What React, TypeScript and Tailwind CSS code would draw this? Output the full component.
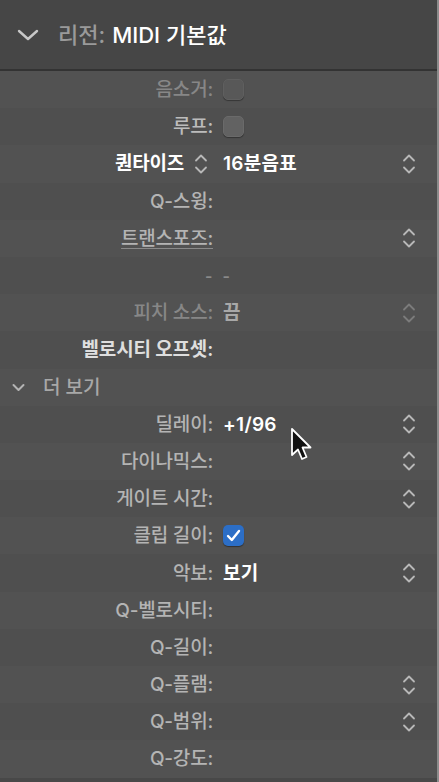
import React from "react";

const font = { fontFamily: 'Inter, "Noto Sans CJK KR", sans-serif' };

function Stepper({ dim = false }: { dim?: boolean }) {
  return (
    <svg width="14" height="24" viewBox="0 0 14 24" fill="none" stroke={dim ? "#7c7c7c" : "#b8b8b8"} strokeWidth="1.8" strokeLinecap="round" strokeLinejoin="round">
      <path d="M2 8.5 L7 3.5 L12 8.5" />
      <path d="M2 15.5 L7 20.5 L12 15.5" />
    </svg>
  );
}

function Checkbox({ checked = false, dim = false }: { checked?: boolean; dim?: boolean }) {
  if (checked) {
    return (
      <div className="w-[21px] h-[21px] rounded-[5px] bg-[#2c6ec6] flex items-center justify-center shadow-[0_1px_1px_rgba(0,0,0,0.4)]">
        <svg width="15" height="13" viewBox="0 0 15 13" fill="none" stroke="white" strokeWidth="2.4" strokeLinecap="round" strokeLinejoin="round">
          <path d="M2 7 L5.8 11 L13 2" />
        </svg>
      </div>
    );
  }
  return (
    <div className={`w-[21px] h-[21px] rounded-[5px] border ${dim ? "bg-[#585858] border-[#5f5f5f]" : "bg-[#626262] border-[#6a6a6a]"} shadow-[0_1px_1px_rgba(0,0,0,0.35)]`} />
  );
}

type RowProps = {
  label: string;
  labelClass?: string;
  value?: React.ReactNode;
  stepper?: boolean;
  stepperDim?: boolean;
  shade: boolean;
  inlineStepper?: boolean;
};

function Row({ label, labelClass = "text-[#b4b4b4] font-medium", value, stepper, stepperDim, shade, inlineStepper }: RowProps) {
  return (
    <div className={`h-[37.2px] flex items-center ${shade ? "bg-[#4f4f4f]" : "bg-[#525252]"}`}>
      <div className="w-[213px] flex justify-end items-center">
        <span className={`text-[19px] leading-none whitespace-nowrap tracking-[-0.2px] ${labelClass}`}>{label}</span>
        {inlineStepper && (
          <span className="ml-[10px] mr-[5px] flex items-center">
            <Stepper />
          </span>
        )}
      </div>
      <div className="ml-[10px] flex items-center">{value}</div>
      <div className="ml-auto mr-[21px] flex items-center">{stepper && <Stepper dim={stepperDim} />}</div>
    </div>
  );
}

export default function App() {
  const v = (t: string, c = "text-white") => (
    <span className={`text-[19px] font-semibold leading-none tracking-[0.3px] ${c}`}>{t}</span>
  );
  return (
    <div className="w-[439px] h-[782px] bg-[#525252] relative overflow-hidden" style={font}>
      <div className="flex h-full">
        <div className="flex-1 flex flex-col">
          <div className="h-[69px] bg-[#464646] flex items-center pl-[17px]">
            <svg width="22" height="14" viewBox="0 0 22 14" fill="none" stroke="#c8c8c8" strokeWidth="2.4" strokeLinecap="round" strokeLinejoin="round">
              <path d="M2 3 L11 11 L20 3" />
            </svg>
            <span className="ml-[19px] text-[22px] leading-none font-medium text-[#9a9a9a]">리전:</span>
            <span className="ml-[7px] text-[22px] leading-none font-medium text-white">MIDI 기본값</span>
          </div>
          <div className="h-[2px] bg-[#333333]" />
          <div className="flex-1 flex flex-col">
            <Row shade={false} label="음소거:" labelClass="text-[#878787] font-medium" value={<Checkbox dim />} />
            <Row shade={true} label="루프:" labelClass="text-[#bcbcbc] font-medium" value={<Checkbox />} />
            <Row shade={false} label="퀀타이즈" labelClass="text-white font-semibold" inlineStepper value={v("16분음표")} stepper />
            <Row shade={true} label="Q-스윙:" />
            <Row shade={false} label="트랜스포즈:" labelClass="text-[#b4b4b4] font-medium underline decoration-[#8a8a8a] underline-offset-[3px]" stepper />
            <Row shade={true} label="" value={<span className="ml-[-18px] text-[16px] text-[#8a8a8a] font-semibold tracking-[10px]">--</span>} />
            <Row shade={false} label="피치 소스:" labelClass="text-[#878787] font-medium" value={v("끔", "text-[#a8a8a8]")} stepper stepperDim />
            <Row shade={true} label="벨로시티 오프셋:" labelClass="text-[#dedede] font-semibold" />
            <div className="h-[37.2px] flex items-center bg-[#525252] pl-[12px]">
              <svg width="13" height="9" viewBox="0 0 13 9" fill="none" stroke="#b4b4b4" strokeWidth="2" strokeLinecap="round" strokeLinejoin="round">
                <path d="M1.5 2 L6.5 7 L11.5 2" />
              </svg>
              <span className="ml-[18px] text-[19px] leading-none font-medium text-[#a8a8a8]">더 보기</span>
            </div>
            <Row shade={true} label="딜레이:" value={v("+1/96")} stepper />
            <Row shade={false} label="다이나믹스:" stepper />
            <Row shade={true} label="게이트 시간:" stepper />
            <Row shade={false} label="클립 길이:" value={<Checkbox checked />} />
            <Row shade={true} label="악보:" value={v("보기")} stepper />
            <Row shade={false} label="Q-벨로시티:" />
            <Row shade={true} label="Q-길이:" />
            <Row shade={false} label="Q-플램:" stepper />
            <Row shade={true} label="Q-범위:" stepper />
            <Row shade={false} label="Q-강도:" />
          </div>
          <div className="flex-1 bg-[#484848]" />
        </div>
        <div className="w-[2px] bg-[#8c8c8c]" />
      </div>
      <svg className="absolute left-[289px] top-[427px]" width="30" height="38" viewBox="0 0 30 38">
        <path d="M3 2 L3 28 L9 22.5 L13 32 L17.5 30 L13.5 20.5 L21.5 20.5 Z" fill="#111" stroke="white" strokeWidth="1.8" strokeLinejoin="round" />
      </svg>
    </div>
  );
}
